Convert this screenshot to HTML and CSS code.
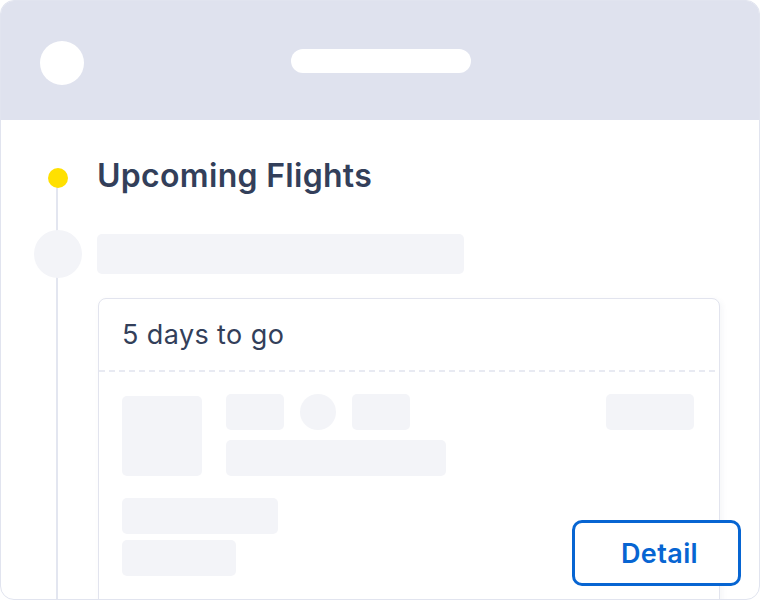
FILE: index.html
```html
<!DOCTYPE html>
<html lang="en">
<head>
<meta charset="utf-8">
<title>Upcoming Flights</title>
<link rel="stylesheet" href="styles.css">
</head>
<body>
<div class="frame">
  <header class="topbar">
    <div class="avatar"></div>
    <div class="pill"></div>
    <div></div>
  </header>
  <main class="timeline">
    <div class="row row-title">
      <span class="dot"></span>
      <h1 class="title">Upcoming Flights</h1>
    </div>
    <div class="row row-skel">
      <span class="marker"></span>
      <div class="bar"></div>
    </div>
    <div class="row row-card">
      <span></span>
      <section class="card">
        <div class="card-head">5 days to go</div>
        <div class="divider"></div>
        <div class="card-body">
          <div class="line-a">
            <div class="sk sk-logo"></div>
            <div class="group">
              <div class="group-top">
                <div class="sk sk-s"></div>
                <div class="sk sk-circle"></div>
                <div class="sk sk-s"></div>
              </div>
              <div class="sk sk-wide"></div>
            </div>
            <div class="sk sk-price"></div>
          </div>
          <div class="line-b">
            <div class="sk sk-b1"></div>
            <div class="sk sk-b2"></div>
          </div>
          <button class="detail">Detail</button>
        </div>
      </section>
    </div>
  </main>
</div>
</body>
</html>
```

FILE: styles.css
```css
* { box-sizing: border-box; }

html, body {
  margin: 0;
  padding: 0;
  background: #ffffff;
}

body {
  font-family: Inter, "Noto Sans", "Liberation Sans", sans-serif;
}

.frame {
  width: 760px;
  height: 600px;
  border: 1px solid #e1e4ef;
  border-radius: 14px;
  overflow: hidden;
  background: #ffffff;
  display: flex;
  flex-direction: column;
}

.topbar {
  height: 119px;
  flex: none;
  background: #dfe2ee;
  display: grid;
  grid-template-columns: 1fr auto 1fr;
  align-items: center;
  padding-left: 39px;
}

.avatar {
  width: 44px;
  height: 44px;
  border-radius: 50%;
  background: #ffffff;
  margin-top: 4px;
}

.pill {
  width: 180px;
  height: 24px;
  border-radius: 12px;
  background: #ffffff;
  margin-right: 38px;
}

.timeline {
  position: relative;
  flex: 1;
  padding-top: 38px;
}

.timeline::before {
  content: "";
  position: absolute;
  left: 55px;
  top: 58px;
  bottom: 0;
  width: 2px;
  background: #e3e6f0;
}

.row {
  display: grid;
  grid-template-columns: 96px 1fr;
  align-items: center;
  position: relative;
}

.row-title {
  height: 36px;
}

.dot {
  width: 20px;
  height: 20px;
  border-radius: 50%;
  background: #ffe000;
  margin-left: 47px;
  margin-top: 4px;
  position: relative;
  z-index: 1;
}

.title {
  margin: 0;
  font-size: 32px;
  line-height: 36px;
  font-weight: 600;
  color: #333f5a;
  letter-spacing: 0.3px;
}

.row-skel {
  height: 48px;
  margin-top: 36px;
}

.marker {
  width: 48px;
  height: 48px;
  border-radius: 50%;
  background: #f3f4f8;
  margin-left: 33px;
  position: relative;
  z-index: 1;
}

.bar {
  width: 367px;
  height: 40px;
  border-radius: 5px;
  background: #f3f4f8;
}

.row-card {
  margin-top: 20px;
  align-items: start;
}

.card {
  margin-left: 1px;
  width: 622px;
  height: 320px;
  border: 1px solid #e2e4ee;
  border-radius: 8px;
  background: #ffffff;
  box-shadow: 2px 2px 6px rgba(40, 50, 90, 0.05);
}

.card-head {
  height: 71px;
  display: flex;
  align-items: center;
  padding-left: 23px;
  font-size: 27px;
  letter-spacing: 0.4px;
  font-weight: 400;
  color: #333f5a;
}

.divider {
  height: 2px;
  background: repeating-linear-gradient(90deg, #e8eaf2 0 6px, transparent 6px 10px);
}

.card-body {
  position: relative;
  padding: 22px 25px 0 23px;
}

.sk {
  background: #f3f4f8;
  border-radius: 5px;
}

.line-a {
  display: flex;
  align-items: flex-start;
}

.sk-logo {
  width: 80px;
  height: 80px;
  margin-top: 2px;
}

.group {
  margin-left: 24px;
  display: flex;
  flex-direction: column;
  gap: 10px;
}

.group-top {
  display: flex;
  gap: 16px;
}

.sk-s {
  width: 58px;
  height: 36px;
}

.sk-circle {
  width: 36px;
  height: 36px;
  border-radius: 50%;
}

.sk-wide {
  width: 220px;
  height: 36px;
}

.sk-price {
  width: 88px;
  height: 36px;
  margin-left: auto;
}

.line-b {
  margin-top: 22px;
  display: flex;
  flex-direction: column;
  gap: 6px;
}

.sk-b1 {
  width: 156px;
  height: 36px;
}

.sk-b2 {
  width: 114px;
  height: 36px;
}

.detail {
  position: absolute;
  right: -22px;
  top: 148px;
  width: 169px;
  height: 66px;
  border: 3px solid #0765d2;
  border-radius: 10px;
  background: #ffffff;
  color: #0765d2;
  font-family: Inter, "Noto Sans", "Liberation Sans", sans-serif;
  font-size: 27px;
  letter-spacing: 0.4px;
  font-weight: 600;
  padding: 0 0 0 6px;
  cursor: pointer;
}
```
